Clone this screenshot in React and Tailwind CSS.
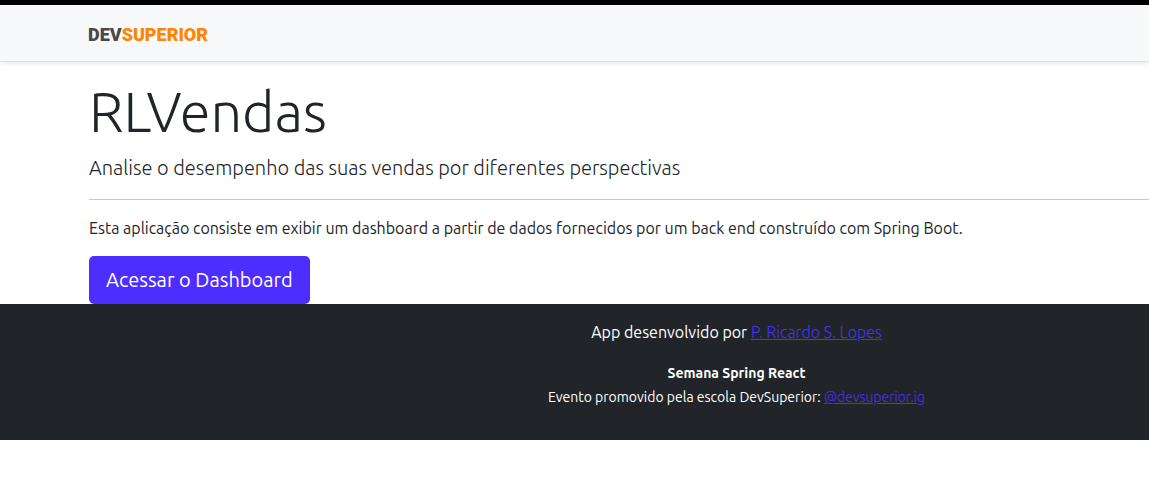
import React from 'react';

function NavBar() {
  return (
    <header className="flex h-[57px] items-center border-b border-[#dee2e6] bg-[#f8f9fb] pt-1 pl-[88px] shadow-[0_2px_4px_rgba(0,0,0,0.075)]">
      <a
        href="#home"
        className="font-['Roboto',sans-serif] text-lg leading-6 font-black text-[#484848]"
      >
        DEV<span className="text-[#ff8400]">SUPERIOR</span>
      </a>
    </header>
  );
}

function Hero() {
  return (
    <main className="pt-4 pl-[89px]">
      <h1 className="mb-2 text-[56px] leading-[67px] font-light">RLVendas</h1>
      <p className="text-xl leading-[30px] font-light">
        Analise o desempenho das suas vendas por diferentes perspectivas
      </p>
      <hr className="my-4 border-[#c8c8c9]" />
      <p className="mb-4">
        Esta aplicação consiste em exibir um dashboard a partir de dados fornecidos por um back end construído com Spring Boot.
      </p>
      <a
        href="#dashboard"
        className="flex h-12 w-fit items-center rounded-[5px] bg-[#4e2eff] px-[17px] text-xl text-white"
      >
        Acessar o Dashboard
      </a>
    </main>
  );
}

function Footer() {
  return (
    <footer className="bg-[#212529] pt-4 pb-[31px] pl-[324px] text-center text-white">
      <p className="mb-[17px]">
        App desenvolvido por{' '}
        <a href="#author" className="font-light text-[#4e2eff] underline">P. Ricardo S. Lopes</a>
      </p>
      <p className="text-sm leading-6">
        <strong className="font-bold">Semana Spring React</strong>
        <br />
        Evento promovido pela escola DevSuperior:{' '}
        <a href="#devsuperior" className="font-light text-[#4e2eff] underline">@devsuperior.ig</a>
      </p>
    </footer>
  );
}

export default function App() {
  return (
    <div className="border-t-[5px] border-black bg-white font-['Ubuntu','Noto_Sans',sans-serif] text-base text-[#212529]">
      <NavBar />
      <Hero />
      <Footer />
    </div>
  );
}
